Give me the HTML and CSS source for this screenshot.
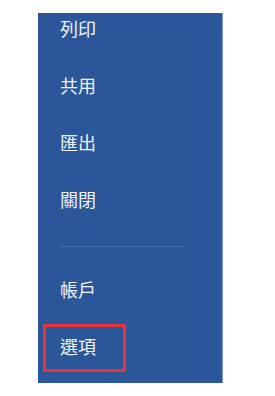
FILE: index.html
```html
<!DOCTYPE html>
<html lang="zh-Hant">

<head>
    <meta charset="UTF-8">
    <meta name="viewport" content="width=device-width, initial-scale=1.0">
    <title>檔案</title>
    <link rel="stylesheet" href="styles.css">
</head>

<body>
    <div class="backstage">
        <nav class="side-menu">
            <ul class="menu-list">
                <li class="menu-item">列印</li>
                <li class="menu-item">共用</li>
                <li class="menu-item">匯出</li>
                <li class="menu-item">關閉</li>
                <li class="menu-sep"></li>
                <li class="menu-item">帳戶</li>
                <li class="menu-item highlight">選項</li>
            </ul>
        </nav>
    </div>
</body>

</html>
```

FILE: styles.css
```css
:root {
    --word-blue: #2b579a;
    --sep-blue: #4670ad;
    --edge-blue: #7b98c7;
    --mark-red: #ec3237;
}

* {
    box-sizing: border-box;
}

body {
    margin: 0;
    background: #ffffff;
    font-family: "Noto Sans CJK TC", "Noto Sans", sans-serif;
}

.backstage {
    padding: 13px 0 0 38px;
}

/* 左側選單 */
.side-menu {
    width: 185px;
    height: 370px;
    background: var(--word-blue);
    border-right: 1px solid var(--edge-blue);
    overflow: hidden;
}

.menu-list {
    list-style: none;
    margin: -13px 0 0 0;
    padding: 0;
}

.menu-item {
    position: relative;
    height: 57px;
    line-height: 57px;
    padding-left: 22px;
    font-size: 18px;
    color: #eef2f8;
}

.menu-sep {
    height: 33px;
    padding: 18px 0 0 22px;
}

.menu-sep::before {
    content: "";
    display: block;
    width: 124px;
    height: 1px;
    background: var(--sep-blue);
}

/* 紅框標示 */
.highlight::after {
    content: "";
    position: absolute;
    left: 5px;
    top: 6px;
    width: 77px;
    height: 42px;
    border: 3px solid var(--mark-red);
}
```
